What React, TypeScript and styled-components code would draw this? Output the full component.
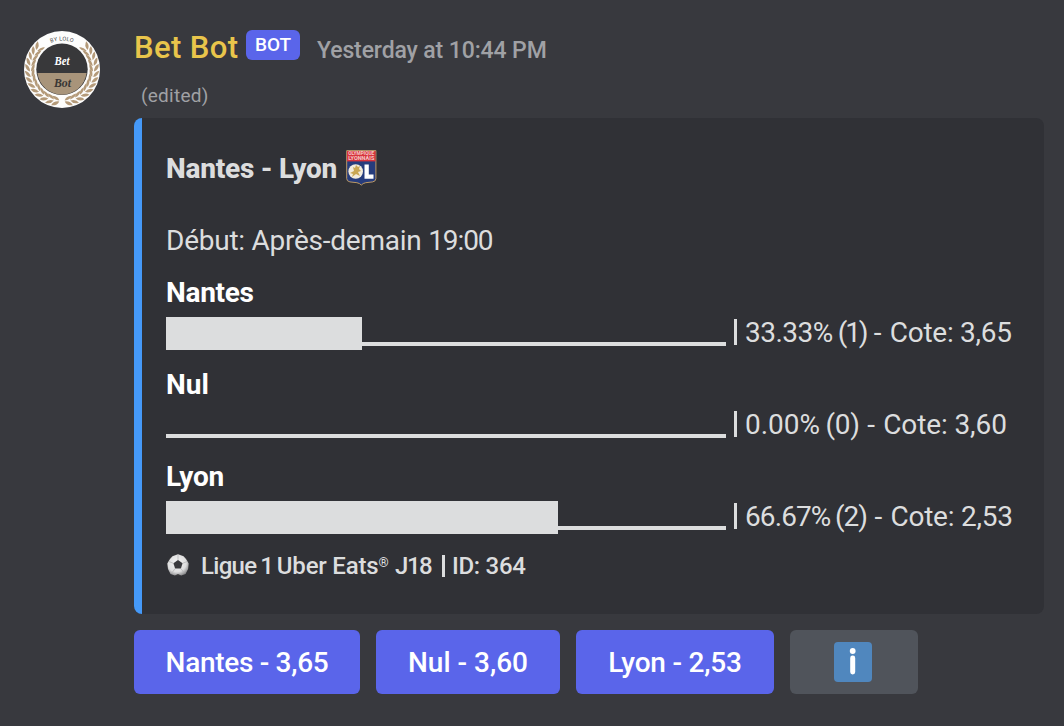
import React from "react";
import styled, { createGlobalStyle } from "styled-components";

const GlobalStyle = createGlobalStyle`
  * { box-sizing: border-box; }
  body {
    margin: 0;
    background: #38393e;
    font-family: Roboto, "Liberation Sans", sans-serif;
    font-size: 28px;
    color: #dcddde;
  }
`;

const Message = styled.article`
  display: flex;
  width: 1064px;
  height: 726px;
  padding: 28px 20px 32px 24px;
  gap: 34px;
  background: #38393e;
`;

const AvatarSvg = styled.svg`
  flex: none;
  width: 76px;
  height: 78px;
  margin-top: 3px;
`;

const Content = styled.div`
  display: flex;
  flex-direction: column;
  flex: 1;
  min-width: 0;
`;

const Header = styled.header`
  display: flex;
  height: 40px;
  white-space: nowrap;
`;

const Run = styled.span<{ $spacing?: number; $words?: number }>`
  letter-spacing: ${(p) => p.$spacing ?? 0}px;
  word-spacing: ${(p) => p.$words ?? 0}px;
  white-space: pre;
`;

const Author = styled.div`
  width: 112px;
  font-size: 31px;
  line-height: 40px;
  font-weight: 500;
  color: #e9c54b;
`;

const BotTag = styled.div`
  width: 54px;
  height: 30px;
  margin-top: 2px;
  border-radius: 6px;
  background: #5a65ea;
  color: #fff;
  font-size: 19px;
  font-weight: 500;
  line-height: 30px;
  text-align: center;
`;

const Timestamp = styled.time`
  margin-left: 17px;
  font-size: 23px;
  font-weight: 500;
  line-height: 45px;
  color: #a0a1a5;
`;

const Edited = styled.div`
  height: 50px;
  padding: 16px 0 0 7px;
  font-size: 19px;
  line-height: 24px;
  color: #a0a1a5;
`;

const Embed = styled.section`
  height: 496px;
  padding: 32px 24px;
  border-left: 8px solid #4599f8;
  border-radius: 8px;
  background: #303136;
`;

const Title = styled.h2`
  display: flex;
  gap: 9px;
  margin: 0 0 36px;
  height: 36px;
  font-size: 28px;
  line-height: 38px;
  font-weight: 800;
`;

const Description = styled.p`
  height: 36px;
  margin: 0 0 18px;
  line-height: 38px;
`;

const Field = styled.div`
  display: flex;
  flex-direction: column;
  gap: 9px;
  height: 92px;
`;

const FieldName = styled.div`
  height: 32px;
  line-height: 34px;
  font-weight: 700;
  color: #fff;
`;

const FieldValue = styled.div`
  display: flex;
  height: 33px;
  line-height: 32px;
`;

const Track = styled.div`
  display: flex;
  flex: none;
  width: 560px;
  height: 33px;
`;

const Fill = styled.div<{ $width: number }>`
  width: ${(p) => p.$width}px;
  background: #dcddde;
`;

const Rest = styled.div`
  flex: 1;
  margin-bottom: 4px;
  border-bottom: 4px solid #dcddde;
`;

const Divider = styled.div<{ $height: number }>`
  flex: none;
  width: 3px;
  height: ${(p) => p.$height}px;
  background: #dcddde;
`;

const Odds = styled.div`
  display: flex;
  padding: 0 0 0 8px;
  & > ${Divider} { margin: 2px 8px 0 0; }
`;

const Footer = styled.footer`
  display: flex;
  height: 32px;
  margin-top: -2px;
  font-size: 24px;
  line-height: 32px;
  font-weight: 500;
  & > ${Divider} { margin: 5px 7px 0 0; }
`;

const Ball = styled.svg`
  flex: none;
  width: 24px;
  height: 24px;
  margin: 3px 11px 0 0;
`;

const League = styled.div`
  width: 241px;
  white-space: nowrap;
`;

const Registered = styled.span`
  font-size: 13px;
  line-height: 0;
  vertical-align: 7px;
`;

const Actions = styled.div`
  display: flex;
  gap: 16px;
  margin-top: 16px;
`;

const Button = styled.button<{ $width: number; $muted?: boolean }>`
  display: flex;
  align-items: center;
  justify-content: center;
  width: ${(p) => p.$width}px;
  height: 64px;
  padding: ${(p) => (p.$muted ? "0 2px 0 0" : "2px 0 0")};
  border: 0;
  border-radius: 6px;
  background: ${(p) => (p.$muted ? "#50545b" : "#5a65ea")};
  color: #fff;
  font: 500 28px/36px Roboto, "Liberation Sans", sans-serif;
`;

const leaves = Array.from({ length: 13 }, (_, i) => 50 + i * 10.2);

const Avatar = () => (
  <AvatarSvg viewBox="0 0 76 78" aria-label="Bet Bot">
    <defs>
      <path id="arc" d="M9 38.500a29 29 0 0 1 58 0" />
    </defs>
    <ellipse cx="38" cy="38.500" rx="38" ry="38.500" fill="#fdfdfc" />
    {[1, -1].map((side) => (
      <g key={side} transform={`translate(38 38.500) scale(${side} 1)`} fill="#b49a79">
        {leaves.map((a) => (
          <g key={a} transform={`rotate(${a}) translate(0 -31.800)`}>
            <path d="M1.500-.2Q0-5-6-5Q-4.500-.4 1.500-.2Z" />
            <path d="M1.500.8Q0 4.800-6 4.600Q-4.500.8 1.500.8Z" />
          </g>
        ))}
      </g>
    ))}
    <circle cx="38" cy="38.300" r="26.600" fill="#fdfdfc" />
    <circle cx="38" cy="38.300" r="25.700" fill="#38383a" />
    <path d="M13.400 42h49.200A24.800 24.800 0 0 1 13.400 42Z" fill="#a8947a" />
    <text fontFamily="Roboto, sans-serif" fontSize="5.600" fill="#444" letterSpacing=".2">
      <textPath href="#arc" startOffset="50%" textAnchor="middle">BY LOLO</textPath>
    </text>
    <g fontFamily="'Liberation Serif', serif" fontStyle="italic" fontWeight="700" fontSize="13" textAnchor="middle">
      <text x="38" y="34.300" fill="#fff" textLength="15" lengthAdjust="spacingAndGlyphs">Bet</text>
      <text x="38.500" y="56.300" fill="#383634" textLength="17" lengthAdjust="spacingAndGlyphs">Bot</text>
    </g>
  </AvatarSvg>
);

const Crest = () => (
  <svg width="31" height="37" viewBox="0 0 31 37" aria-label="Olympique Lyonnais">
    <path d="M.7.6h29.200v28q0 2.700-3.200 3.300l-7 .8q-2.800.5-4.400 2.400-1.600-1.900-4.400-2.400l-7-.8Q.7 31.300.7 28.600Z" fill="#263c7c" stroke="#bd9a65" strokeWidth="1" />
    <path d="M1 1h28.600v10.400H1Z" fill="#d8343c" />
    <g fontFamily="Roboto, sans-serif" fontWeight="700" fontSize="4.800" fill="#f4c9c7" textAnchor="middle">
      <text x="15.300" y="5.400" textLength="26" lengthAdjust="spacingAndGlyphs">OLYMPIQUE</text>
      <text x="15.300" y="10" textLength="26" lengthAdjust="spacingAndGlyphs">LYONNAIS</text>
    </g>
    <circle cx="9.700" cy="21.500" r="7.300" fill="#f2ecdc" />
    <path d="M7 17l2 1 1-3 2 2 2-1-1 3 2 2-3 1 2 4-4-2-4 3 1-3-3-1 4-2Z" fill="#c9a753" />
    <path d="M18.500 14.500h4.300v10h4.700v4.300h-9Z" fill="#fff" />
  </svg>
);

const SoccerBall = () => (
  <Ball viewBox="0 0 24 24" aria-hidden="true">
    <defs>
      <radialGradient id="leather" cx=".45" cy=".4" r=".62">
        <stop offset="0" stopColor="#f4f4f4" />
        <stop offset=".7" stopColor="#dededf" />
        <stop offset="1" stopColor="#8e8e90" />
      </radialGradient>
    </defs>
    <circle cx="12" cy="12" r="10.800" fill="#3b3b3e" />
    <path d="M6.500 3.200 12 1.200l5.500 2L20 6l2.700 4.500-.6 5.500-2.600 5-4.300 1.500-3.200-1.500-3.200 1.500L4.500 21 2 16l-.7-5.500L4 6Z" fill="url(#leather)" />
    <path d="m12 7 4.600 3.300-1.700 5.200H9.100l-1.700-5.200Z" fill="#3a3a3e" />
    <path d="M12 7V2M16.600 10.300l4.600-1.800M14.900 15.500l3 4.200M9.100 15.500l-3 4.200M7.400 10.300 2.800 8.500" stroke="#b0b0b2" strokeWidth=".7" />
  </Ball>
);

const InfoIcon = () => (
  <svg width="38" height="40" viewBox="0 0 38 40" aria-label="Information">
    <rect width="38" height="40" rx="4" fill="#5087be" />
    <circle cx="18.700" cy="9" r="2.900" fill="#fff" />
    <rect x="16.200" y="13.500" width="5" height="19" rx="2.400" fill="#fff" />
  </svg>
);

const outcomes = [
  { name: "Nantes", nameSpacing: -0.3, fill: 196, share: "33.33% ", shareSpacing: -0.5, votes: "(1)", votesSpacing: -2.2, odds: "3,65", oddsSpacing: -0.25 },
  { name: "Nul", nameSpacing: 0, fill: 0, share: "0.00% ", shareSpacing: 0, votes: "(0)", votesSpacing: -0.3, odds: "3,60", oddsSpacing: -0.1 },
  { name: "Lyon", nameSpacing: -0.2, fill: 392, share: "66.67% ", shareSpacing: -0.9, votes: "(2)", votesSpacing: -1, odds: "2,53", oddsSpacing: -0.25 },
];

const bets = [
  { label: "Nantes - 3,65", width: 226, spacing: -0.3 },
  { label: "Nul - 3,60", width: 184, spacing: 0 },
  { label: "Lyon - 2,53", width: 198, spacing: -0.2 },
];

export default function App() {
  return (
    <>
      <GlobalStyle />
      <Message>
        <Avatar />
        <Content>
          <Header>
            <Author><Run $spacing={0.4}>Bet Bot</Run></Author>
            <BotTag><Run>BOT</Run></BotTag>
            <Timestamp><Run $spacing={-0.12}>Yesterday at 10:44 PM</Run></Timestamp>
          </Header>
          <Edited><Run $spacing={0.25}>(edited)</Run></Edited>
          <Embed>
            <Title><Run $spacing={-0.25}>Nantes - Lyon</Run><Crest /></Title>
            <Description>
              <Run $spacing={-0.25}>Début: Après-demain </Run>
              <Run $spacing={-1.1}>19:00</Run>
            </Description>
            {outcomes.map((o) => (
              <Field key={o.name}>
                <FieldName><Run $spacing={o.nameSpacing}>{o.name}</Run></FieldName>
                <FieldValue>
                  <Track><Fill $width={o.fill} /><Rest /></Track>
                  <Odds>
                    <Divider $height={26} />
                    <Run $spacing={o.shareSpacing} $words={-1.5}>{o.share}</Run>
                    <Run $spacing={o.votesSpacing}>{o.votes}</Run>
                    <Run $spacing={0.6}>{" - "}</Run>
                    <Run $spacing={o.oddsSpacing}>{`Cote: ${o.odds}`}</Run>
                  </Odds>
                </FieldValue>
              </Field>
            ))}
            <Footer>
              <SoccerBall />
              <League>
                <Run $spacing={-0.7} $words={-1.5}>{"Ligue 1 "}</Run>
                <Run $spacing={-0.2}>Uber Eats</Run>
                <Registered>®</Registered>
                <Run $spacing={-1.5} $words={2}>{" J18"}</Run>
              </League>
              <Divider $height={22} />
              <Run $spacing={-0.3}>ID: 364</Run>
            </Footer>
          </Embed>
          <Actions>
            {bets.map((b) => (
              <Button key={b.label} $width={b.width}><Run $spacing={b.spacing}>{b.label}</Run></Button>
            ))}
            <Button $width={128} $muted><InfoIcon /></Button>
          </Actions>
        </Content>
      </Message>
    </>
  );
}
